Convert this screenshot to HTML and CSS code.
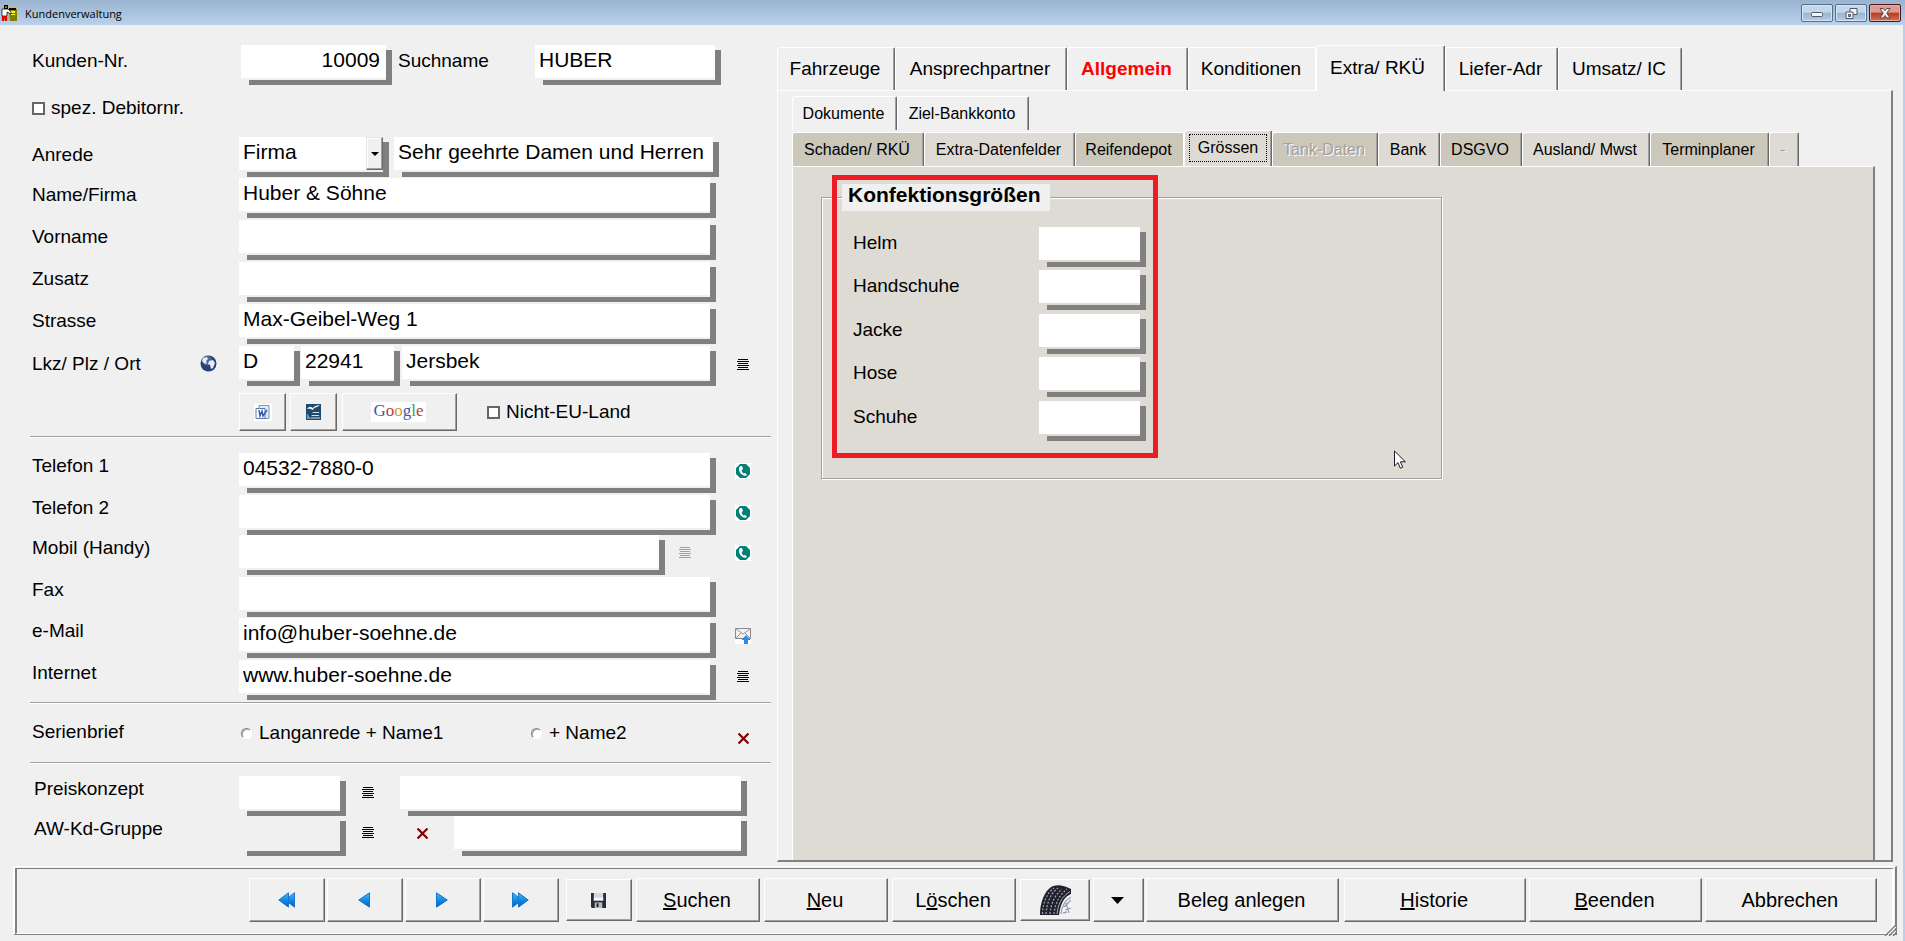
FILE: index.html
```html
<!DOCTYPE html>
<html lang="de">
<head>
<meta charset="utf-8">
<title>Kundenverwaltung</title>
<link rel="stylesheet" href="styles.css">
</head>
<body>
<svg class="defs" aria-hidden="true">
  <symbol id="i-lines" viewBox="0 0 12 11"><path d="M1 .5h10M0 2.500h12M1 4.500h10M0 6.500h12M1 8.500h10M0 10.500h12" stroke="currentColor" fill="none"/></symbol>
  <symbol id="i-cross" viewBox="0 0 11 11"><path d="M.500 .5l10 10M10.500 .5l-10 10" stroke="#800000" stroke-width="2.200" fill="none"/></symbol>
  <symbol id="i-phone" viewBox="0 0 16 16"><rect width="16" height="16" fill="#fff"/><path d="M5 1h6l4 4v6l-4 4H5l-4-4V5z" fill="#008078"/><path d="M5 3.200C3.200 5 4 9.200 7 11.600c1.800 1.500 4 1.600 5 .4l-1.700-2-1.700.6C7.500 9.700 6.800 8.300 6.700 7L8 6 7 3z" fill="#fff"/></symbol>
  <linearGradient id="g-blue" x1="0" y1="0" x2="0" y2="1"><stop offset="0" stop-color="#3fc0f5"/><stop offset=".55" stop-color="#0f86e0"/><stop offset="1" stop-color="#0a5fc0"/></linearGradient>
  <symbol id="i-play" viewBox="0 0 12 16"><path d="M.500 .8L11.300 8 .5 15.200z" fill="url(#g-blue)" stroke="#1874cc"/></symbol>
  <symbol id="i-fast" viewBox="0 0 17 16"><path d="M.500 .8L10 8 .5 15.200z" fill="url(#g-blue)" stroke="#1874cc"/><path d="M6.500 .8L16.200 8 6.500 15.200z" fill="url(#g-blue)" stroke="#1874cc"/></symbol>
</svg>

<header class="titlebar">
  <svg class="app-icon" viewBox="0 0 16 16" width="16" height="16" aria-hidden="true">
    <rect width="16" height="16" fill="#b8b8a8"/><path d="M8 4h8v12H9z" fill="#808000"/><path d="M8 3h7v2H8z" fill="#000"/><path d="M9 6h5v2H9zM10 9h4v1h-4z" fill="#ff0"/><path d="M3 0h4v4H3z" fill="#000"/><path d="M4 1h2v2H4z" fill="#808000"/><path d="M1 4h6l3 3v2L6 7v4H1z" fill="#fff" stroke="#000" stroke-width=".7"/><path d="M1 11h5v5H4v-3l-1 3H1z" fill="#e00000"/>
  </svg>
  <span class="title">Kundenverwaltung</span>
  <div class="window-buttons">
    <button type="button" aria-label="Minimieren"><svg width="12" height="12"><rect x=".5" y="5.500" width="11" height="4" rx="1" fill="#f4f4f4" stroke="#505a68"/></svg></button>
    <button type="button" aria-label="Wiederherstellen"><svg width="13" height="13"><path d="M5 1.500h7v6H5z" fill="#f4f4f4" stroke="#505a68"/><path d="M1 5h7v6.500H1z" fill="#f4f4f4" stroke="#505a68"/><path d="M3.500 7.500h2v2h-2z" fill="#7f9dbd" stroke="#505a68"/></svg></button>
    <button type="button" class="close" aria-label="Schließen"><svg width="12" height="11"><path d="M1 .5h3.200L6 2.800 7.800.5H11L7.800 5.200 11 10H7.800L6 7.500 4.200 10H1l3.200-4.800z" fill="#f4f4f4" stroke="#5a4650"/></svg></button>
  </div>
</header>

<div class="window">
<main class="content">
  <form class="customer">
    <div class="row row-number">
      <label class="caption" for="nr">Kunden-Nr.</label>
      <span class="field number"><input id="nr" class="right" value="10009"></span>
      <label class="inline-caption" for="such">Suchname</label>
      <span class="field grow"><input id="such" value="HUBER"></span>
    </div>
    <div class="row row-check">
      <label class="check"><input type="checkbox"> spez. Debitornr.</label>
    </div>

    <div class="address">
      <div class="row row-salutation">
        <label class="caption" for="anrede">Anrede</label>
        <span class="field combo"><select id="anrede"><option>Firma</option></select><span class="drop"><svg width="8" height="4"><path d="M0 0h8L4 4z"/></svg></span></span>
        <span class="field grow"><input aria-label="Briefanrede" value="Sehr geehrte Damen und Herren"></span>
      </div>
      <div class="row"><label class="caption" for="name">Name/Firma</label><span class="field grow"><input id="name" value="Huber &amp; Söhne"></span><span class="side"></span></div>
      <div class="row"><label class="caption" for="vorname">Vorname</label><span class="field grow"><input id="vorname"></span><span class="side"></span></div>
      <div class="row"><label class="caption" for="zusatz">Zusatz</label><span class="field grow"><input id="zusatz"></span><span class="side"></span></div>
      <div class="row"><label class="caption" for="strasse">Strasse</label><span class="field grow"><input id="strasse" value="Max-Geibel-Weg 1"></span><span class="side"></span></div>
      <div class="row place">
        <label class="caption with-icon" for="lkz">Lkz/ Plz / Ort
          <svg width="17" height="17" viewBox="0 0 17 17" aria-hidden="true"><circle cx="8.500" cy="8.500" r="8" fill="#2b3f78"/><circle cx="7" cy="5.500" r="5" fill="#6c80b4" opacity=".6"/><path d="M3 3l4-1 1 2-2 2 1 2-2 1-3-3zM9 6l4-1 2 3-2 5-2 1-1-4-2-1z" fill="#e8ecf8"/></svg>
        </label>
        <span class="field land"><input id="lkz" value="D"></span>
        <span class="field zip"><input aria-label="Plz" value="22941"></span>
        <span class="field grow"><input aria-label="Ort" value="Jersbek"></span>
        <span class="side"><button type="button" class="glyph" aria-label="Ortsliste"><svg width="12" height="11"><use href="#i-lines"/></svg></button></span>
      </div>
    </div>

    <div class="row-tools">
      <button type="button" class="btn tool" aria-label="Word">
        <svg width="18" height="17" viewBox="0 0 18 17"><rect width="18" height="17" fill="#fff"/><path d="M5 1.500h10v13H5z" fill="#dfe9f7" stroke="#7d94bd"/><path d="M2 4.500h9v10H2z" fill="#fff" stroke="#5a78b0"/><path d="M5 6l1 6 2-5 1 5 4-6" stroke="#3b5ba0" stroke-width="1.500" fill="none"/></svg>
      </button>
      <button type="button" class="btn tool" aria-label="Writer">
        <svg width="15" height="16" viewBox="0 0 16 16" preserveAspectRatio="none"><rect width="16" height="16" fill="#1f4a6c"/><path d="M1 5q3-4 6-1q3-3 8-3q-2 1-3 2q-3 0-5 3q-3-2-6-1z" fill="#e4f0f8"/><path d="M7 8.500h7M6 11.500h8M5 14h10" stroke="#d4e4f0"/><path d="M1 15V9l4 6z" fill="#6f9ab8"/></svg>
      </button>
      <button type="button" class="btn google" aria-label="Google Maps"><span class="google-logo"><span class="g-b">G</span><span class="g-r">o</span><span class="g-y">o</span><span class="g-b">g</span><span class="g-g">l</span><span class="g-r">e</span></span></button>
      <label class="check non-eu"><input type="checkbox"> Nicht-EU-Land</label>
    </div>

    <hr>

    <div class="contact">
      <div class="row"><label class="caption" for="tel1">Telefon 1</label><span class="field grow"><input id="tel1" value="04532-7880-0"></span><span class="side"><button type="button" class="glyph" aria-label="Telefon 1 anrufen"><svg width="16" height="16"><use href="#i-phone"/></svg></button></span></div>
      <div class="row"><label class="caption" for="tel2">Telefon 2</label><span class="field grow"><input id="tel2"></span><span class="side"><button type="button" class="glyph" aria-label="Telefon 2 anrufen"><svg width="16" height="16"><use href="#i-phone"/></svg></button></span></div>
      <div class="row"><label class="caption" for="mobil">Mobil (Handy)</label><span class="field grow"><input id="mobil"></span><span class="extra"><button type="button" class="glyph" disabled aria-label="Mobilliste"><svg width="12" height="11"><use href="#i-lines"/></svg></button></span><span class="side"><button type="button" class="glyph" aria-label="Mobil anrufen"><svg width="16" height="16"><use href="#i-phone"/></svg></button></span></div>
      <div class="row"><label class="caption" for="fax">Fax</label><span class="field grow"><input id="fax"></span><span class="side"></span></div>
      <div class="row"><label class="caption" for="mail">e-Mail</label><span class="field grow"><input id="mail" value="info@huber-soehne.de"></span><span class="side"><button type="button" class="glyph" aria-label="E-Mail senden"><svg width="16" height="16" viewBox="0 0 16 16"><rect width="16" height="16" fill="#fff"/><path d="M.500 .5h15v10H.5z" fill="#f2f2f2" stroke="#888"/><path d="M1 1l7 5 7-5M1 10l5-5M15 10l-5-5" stroke="#999" fill="none"/><path d="M11 7l4.500 5H13v4H9v-4H6.500z" fill="#2a8cf0"/></svg></button></span></div>
      <div class="row"><label class="caption" for="web">Internet</label><span class="field grow"><input id="web" value="www.huber-soehne.de"></span><span class="side web"><button type="button" class="glyph" aria-label="Internetliste"><svg width="12" height="11"><use href="#i-lines"/></svg></button></span></div>
    </div>

    <hr>

    <div class="row-letter">
      <span class="caption">Serienbrief</span>
      <label class="radio first"><input type="radio" name="brief"> Langanrede + Name1</label>
      <label class="radio"><input type="radio" name="brief"> + Name2</label>
      <span class="side"><button type="button" class="glyph" aria-label="Auswahl löschen"><svg width="11" height="11"><use href="#i-cross"/></svg></button></span>
    </div>

    <hr>

    <div class="pricing">
      <div class="row"><label class="caption" for="preis">Preiskonzept</label><span class="field code"><input id="preis"></span><span class="pick"><button type="button" class="glyph" aria-label="Preiskonzepte"><svg width="12" height="11"><use href="#i-lines"/></svg></button></span><span class="field grow"><input aria-label="Preiskonzept Bezeichnung"></span></div>
      <div class="row"><label class="caption" for="gruppe">AW-Kd-Gruppe</label><span class="field code"><input id="gruppe" disabled></span><span class="pick"><button type="button" class="glyph" aria-label="Gruppen"><svg width="12" height="11"><use href="#i-lines"/></svg></button></span><span class="clear"><button type="button" class="glyph" aria-label="Gruppe löschen"><svg width="11" height="11"><use href="#i-cross"/></svg></button></span><span class="field grow"><input aria-label="Gruppe Bezeichnung"></span></div>
    </div>
  </form>

  <section class="details">
    <div class="tabs main-tabs" role="tablist">
      <button type="button" role="tab">Fahrzeuge</button>
      <button type="button" role="tab">Ansprechpartner</button>
      <button type="button" role="tab" class="alert">Allgemein</button>
      <button type="button" role="tab">Konditionen</button>
      <button type="button" role="tab" aria-selected="true">Extra/ RKÜ</button>
      <button type="button" role="tab">Liefer-Adr</button>
      <button type="button" role="tab">Umsatz/ IC</button>
    </div>
    <div class="outer-panel">
      <div class="tabs sub-tabs upper" role="tablist">
        <button type="button" role="tab">Dokumente</button>
        <button type="button" role="tab">Ziel-Bankkonto</button>
      </div>
      <div class="tabs sub-tabs lower" role="tablist">
        <button type="button" role="tab">Schaden/ RKÜ</button>
        <button type="button" role="tab">Extra-Datenfelder</button>
        <button type="button" role="tab">Reifendepot</button>
        <button type="button" role="tab" aria-selected="true"><span class="focus">Grössen</span></button>
        <button type="button" role="tab" disabled>Tank-Daten</button>
        <button type="button" role="tab">Bank</button>
        <button type="button" role="tab">DSGVO</button>
        <button type="button" role="tab">Ausland/ Mwst</button>
        <button type="button" role="tab">Terminplaner</button>
        <button type="button" role="tab" disabled>-</button>
      </div>
      <div class="inner-panel" role="tabpanel">
        <fieldset class="sizes">
          <legend>Konfektionsgrößen</legend>
          <div class="size-rows">
            <label for="helm">Helm</label><span class="field"><input id="helm"></span>
            <label for="handschuhe">Handschuhe</label><span class="field"><input id="handschuhe"></span>
            <label for="jacke">Jacke</label><span class="field"><input id="jacke"></span>
            <label for="hose">Hose</label><span class="field"><input id="hose"></span>
            <label for="schuhe">Schuhe</label><span class="field"><input id="schuhe"></span>
          </div>
        </fieldset>
        <div class="highlight"></div>
        <svg class="pointer" width="12" height="19" viewBox="0 0 12 19" aria-hidden="true"><path d="M.500 1v15l3.500-3.400 2.300 5.600 2.400-1-2.300-5.400h5z" fill="#fff" stroke="#1c1c28"/></svg>
      </div>
    </div>
  </section>
</main>

<footer class="frame">
  <div class="actions">
    <div class="nav">
      <button type="button" class="btn flip" aria-label="Erster"><svg width="17" height="16"><use href="#i-fast"/></svg></button>
      <button type="button" class="btn flip" aria-label="Zurück"><svg width="12" height="16"><use href="#i-play"/></svg></button>
      <button type="button" class="btn" aria-label="Weiter"><svg width="12" height="16"><use href="#i-play"/></svg></button>
      <button type="button" class="btn" aria-label="Letzter"><svg width="17" height="16"><use href="#i-fast"/></svg></button>
    </div>
    <div class="edit">
      <button type="button" class="btn icon" aria-label="Speichern"><svg width="15" height="15" viewBox="0 0 16 16"><path d="M0 0h16v16H1l-1-1z" fill="#2a2c38"/><path d="M3 0h10v8H3z" fill="#d2d8e2"/><path d="M3 5h10v3H3z" fill="#f8fafc"/><path d="M4 10h8v6H4z" fill="#b8bcc4"/><path d="M6 11h2v4H6z" fill="#1c1c24"/></svg></button>
      <button type="button" class="btn"><u>S</u>uchen</button>
      <button type="button" class="btn"><u>N</u>eu</button>
      <button type="button" class="btn">L<u>ö</u>schen</button>
      <button type="button" class="btn icon tyre" aria-label="Reifen"><svg width="31" height="30" viewBox="0 0 31 30"><path d="M29 7l2 1v21H20Q19 14 29 7z" fill="#f6f6fa"/><path d="M0 30C0 18 4 7 11 2q4-2.500 10-1.500 5 .5 10 3.500V9Q21 13 19 30z" fill="#20202a"/><path d="M2.500 29C3 17 7 8 14 3M6 29C7 18 10 9 18 3M10 29C11 19 14 11 22 4M14 29C15 20 18 11 27 4" fill="none" stroke="#9c9eb0" stroke-width="1.300" stroke-dasharray="2 1.500"/><path d="M17 29C18 20 21 12 30 6.500" fill="none" stroke="#d0d2dc" stroke-width=".8"/><path d="M21 29q1-12 10-17M24 22l7-7M25 25l6-2M26 18l3 10M23 28l4-1" fill="none" stroke="#9a9cb2" stroke-width="1.300"/></svg></button>
    </div>
    <div class="voucher">
      <button type="button" class="btn more" aria-label="Belegarten"><svg width="13" height="7" viewBox="0 0 13 7"><path d="M0 0h13L6.500 7z"/></svg></button>
      <button type="button" class="btn">Beleg anlegen</button>
    </div>
    <div class="leave">
      <button type="button" class="btn wide"><u>H</u>istorie</button>
      <button type="button" class="btn"><u>B</u>eenden</button>
      <button type="button" class="btn">Abbrechen</button>
    </div>
  </div>
  <svg class="grip" width="12" height="12" aria-hidden="true"><path d="M1 12L12 1M5 12l7-7M9 12l3-3" stroke="#808080" stroke-width="1.500"/><path d="M3 12l9-9M7 12l5-5" stroke="#fff"/></svg>
</footer>
</div>
</body>
</html>
```

FILE: styles.css
```css
* {
  box-sizing: border-box;
}

body {
  margin: 0;
  min-height: 100vh;
  display: flex;
  flex-direction: column;
  background: #f0f0f0;
  color: #000;
  font: 19px/24px "Liberation Sans", Arial, sans-serif;
}

button,
input,
select {
  margin: 0;
  padding: 0;
  border: 0;
  color: inherit;
  font: inherit;
}

svg {
  display: block;
}

.defs {
  position: absolute;
  width: 0;
  height: 0;
}

/* Title bar */
.titlebar {
  display: flex;
  align-items: center;
  height: 25px;
  padding: 1px 4px 0 1px;
  background: linear-gradient(#9ab4d0, #b9d1ea);
}

.title {
  flex: 1;
  margin: 1px 0 0 8px;
  font: 11px/16px "Open Sans", "Noto Sans", sans-serif;
}

.window-buttons {
  display: flex;
  gap: 2px;
}

.window-buttons button {
  display: flex;
  align-items: center;
  justify-content: center;
  width: 32px;
  height: 18px;
  border: 1px solid #53708f;
  border-radius: 2px;
  background: linear-gradient(#c4d6ea 45%, #9bb6d3 50%, #b4cce6);
  box-shadow: inset 0 0 0 1px #d6e4f3;
}

.window-buttons .close {
  border-color: #4d1420;
  background: linear-gradient(#dd9a8e 45%, #b83a22 50%, #d0705a);
  box-shadow: inset 0 0 0 1px #e6b0a6;
}

/* Window body */
.window {
  flex: 1;
  display: flex;
  flex-direction: column;
  border-right: 2px solid #b9d1ea;
}

.content {
  flex: 1;
  display: grid;
  grid-template-columns: minmax(0, 777fr) minmax(0, 1126fr);
}

.customer {
  padding: 20px 6px 0 30px;
}

.row {
  display: flex;
  height: 40px;
  padding-left: 2px;
}

.caption {
  flex: none;
  width: 207px;
  line-height: 33px;
}

.grow {
  flex: 1;
  min-width: 0;
}

/* Text box with an offset bar to the right and below */
.field {
  display: block;
  position: relative;
  height: 40px;
  padding-right: 6px;
  background:
    linear-gradient(#808080, #808080) right bottom / calc(100% - 8px) 5px no-repeat,
    linear-gradient(#808080, #808080) right bottom / 6px 35px no-repeat;
}

.field input,
.field select {
  display: block;
  width: 100%;
  height: 33px;
  padding: 0 4px 3px;
  border-radius: 0;
  background: #fff;
  font-size: 21px;
  appearance: none;
}

.field input:disabled {
  background: #f0f0f0;
}

.field .right {
  padding-right: 6px;
  text-align: right;
}

.row-number {
  padding-right: 50px;
}

.row-number .caption {
  width: 209px;
  line-height: 31px;
}

.number {
  width: 151px;
}

.inline-caption {
  width: 143px;
  padding-left: 6px;
  line-height: 31px;
}

.row-check {
  align-items: center;
  height: 46px;
}

.check {
  display: flex;
  align-items: center;
  gap: 6px;
}

.check input {
  width: 13px;
  height: 13px;
  border: 2px solid #666;
  background: #fff;
  appearance: none;
}

.address {
  display: grid;
  grid-template-rows: 41px repeat(4, 42px) 40px;
  margin-top: 6px;
}

.row-salutation {
  padding-right: 52px;
}

.row-salutation .caption {
  line-height: 36px;
}

.combo {
  width: 150px;
  margin-right: 5px;
}

.drop {
  position: absolute;
  top: 0;
  right: 6px;
  display: flex;
  align-items: center;
  justify-content: center;
  width: 17px;
  height: 33px;
  border: 1px solid #e3e3e3;
  border-right-color: #696969;
  border-bottom-color: #696969;
  background: #f0f0f0;
  box-shadow: inset -1px -1px #a0a0a0, inset 1px 1px #fff;
  pointer-events: none;
}

.side {
  display: flex;
  flex: none;
  align-items: center;
  justify-content: center;
  width: 55px;
  height: 36px;
  padding-right: 1px;
}

.web {
  height: 32px;
}

.glyph {
  display: block;
  background: none;
}

.glyph:disabled {
  color: #a0a0a0;
}

.with-icon {
  display: flex;
  justify-content: space-between;
  align-items: center;
  height: 34px;
  padding-right: 22px;
}

.land {
  width: 61px;
  margin-right: 1px;
}

.zip {
  width: 99px;
  margin-right: 2px;
}

/* Raised buttons */
.btn {
  display: flex;
  align-items: center;
  justify-content: center;
  border: 1px solid #fff;
  border-right-color: #696969;
  border-bottom-color: #696969;
  background: #f0f0f0;
  box-shadow: inset -1px -1px #a0a0a0;
  white-space: pre;
}

.row-tools {
  display: flex;
  gap: 4px;
  height: 38px;
  margin: 7px 0 5px 209px;
}

.tool {
  width: 47px;
}

.google {
  width: 115px;
  margin-left: 1px;
  padding-right: 2px;
}

.google-logo {
  padding: 0 2px 2px;
  background: #fff;
  font: 17px/18px "Liberation Serif", serif;
}

.g-b { color: #3c5aa8; }
.g-r { color: #b83c44; }
.g-y { color: #c8a038; }
.g-g { color: #4c9a50; }

.non-eu {
  margin-left: 26px;
}

hr {
  height: 2px;
  margin: 0;
  border: 0;
  border-top: 1px solid #a0a0a0;
  background: #fff;
}

.contact {
  display: grid;
  grid-template-rows: 42px 40px 42px 41px 42px 40px;
  margin: 15px 0 2px;
}

.contact .caption,
.pricing .caption {
  line-height: 26px;
}

.extra {
  display: flex;
  align-items: center;
  width: 51px;
  height: 34px;
  padding-left: 14px;
}

.row-letter {
  display: flex;
  height: 58px;
  padding-left: 2px;
}

.row-letter .caption {
  width: 209px;
  line-height: 56px;
}

.radio {
  display: flex;
  flex: 1;
  align-items: center;
  gap: 7px;
  line-height: 62px;
}

.radio.first {
  flex: none;
  width: 290px;
}

.radio input {
  width: 11px;
  height: 11px;
  border: 1px solid #808080;
  border-right-color: #fff;
  border-bottom-color: #fff;
  border-radius: 50%;
  background: #fff;
  box-shadow: inset 1px 1px #b0b0b0;
  appearance: none;
}

.row-letter .side {
  height: 68px;
}

.pricing {
  margin-top: 12px;
}

.pricing .row {
  padding: 0 24px 0 4px;
}

.pricing .caption {
  width: 205px;
}

.code {
  width: 107px;
}

.pick {
  display: flex;
  align-items: center;
  justify-content: center;
  width: 54px;
  height: 32px;
  padding-right: 10px;
}

.clear {
  display: flex;
  align-items: center;
  width: 54px;
  height: 34px;
  padding-left: 17px;
}

/* Tabbed details */
.details {
  display: flex;
  flex-direction: column;
  padding: 20px 10px 0 0;
}

.tabs {
  display: flex;
  align-items: flex-end;
}

.tabs button {
  padding-right: 2px;
  border: 1px solid #fff;
  border-right: 1px solid #696969;
  border-bottom: 0;
  border-radius: 3px 2px 0 0;
  background: #f0f0f0;
  box-shadow: inset -1px 0 #a0a0a0;
  white-space: nowrap;
}

.main-tabs button {
  height: 43px;
}

.main-tabs button[aria-selected="true"] {
  position: relative;
  height: 46px;
  margin-bottom: -1px;
  padding: 0 6px 2px 0;
}

.main-tabs button:nth-child(1) { width: 118px; }
.main-tabs button:nth-child(2) { width: 172px; }
.main-tabs button:nth-child(3) { width: 121px; }
.main-tabs button:nth-child(4) { width: 128px; border-right-color: #fff; box-shadow: none; }
.main-tabs button:nth-child(5) { width: 129px; }
.main-tabs button:nth-child(6) { width: 113px; }
.main-tabs button:nth-child(7) { width: 124px; }

.tabs .alert {
  color: #f00;
  font-weight: bold;
}

.outer-panel {
  flex: 1;
  display: flex;
  flex-direction: column;
  padding: 5px 16px 0 14px;
  border: 1px solid #fff;
  border-right: 2px solid #808080;
  border-bottom: 2px solid #808080;
}

.sub-tabs button {
  height: 34px;
  font-size: 16px;
}

.upper button:nth-child(1) { width: 105px; }
.upper button:nth-child(2) { width: 132px; }

.lower {
  height: 36px;
}

.lower button {
  background: #dedbd5;
}

.lower button:nth-child(1) { width: 132px; }
.lower button:nth-child(2) { width: 151px; }
.lower button:nth-child(3) { width: 109px; border-right-color: #fff; box-shadow: none; }
.lower button:nth-child(4) { width: 88px; }
.lower button:nth-child(5) { width: 106px; }
.lower button:nth-child(6) { width: 62px; }
.lower button:nth-child(7) { width: 82px; }
.lower button:nth-child(8) { width: 128px; }
.lower button:nth-child(9) { width: 119px; }
.lower button:nth-child(10) { width: 30px; }

.lower button:nth-child(1),
.lower button:nth-child(3),
.lower button:nth-child(5),
.lower button:nth-child(7),
.lower button:nth-child(9) {
  background: #cbc7bb;
}

.lower button:disabled {
  color: #a0a0a0;
  text-shadow: 1px 1px #fff;
}

.lower button[aria-selected="true"] {
  position: relative;
  height: 37px;
  margin-bottom: -1px;
  padding: 0 4px 3px;
}

.focus {
  display: block;
  border: 1px dotted #000;
  line-height: 26px;
}

.inner-panel {
  position: relative;
  flex: 1;
  padding: 17px 28px;
  border: 1px solid #fff;
  border-right: 2px solid #808080;
  border-bottom: 0;
  background: #dedbd5;
}

.sizes {
  width: 621px;
  max-width: 100%;
  height: 295px;
  margin: 0;
  padding: 16px 20px 0;
  border: 1px solid #a0a0a0;
  box-shadow: 1px 1px #fff, inset 1px 1px #fff;
}

legend {
  padding: 0 9px 5px 6px;
  background: #f0f0f0;
  font-weight: bold;
  font-size: 21px;
  line-height: 22px;
}

.size-rows {
  display: grid;
  grid-template-columns: 186px 107px;
  grid-template-rows: 43px 44px 43px 44px 40px;
  padding-left: 11px;
}

.size-rows label {
  line-height: 32px;
}

/* Marker frame around the size fields */
.highlight {
  position: absolute;
  top: 8px;
  left: 39px;
  width: 326px;
  height: 283px;
  border: 5px solid #ed1c24;
  pointer-events: none;
}

.pointer {
  position: absolute;
  top: 283px;
  left: 601px;
}

/* Button bar */
.frame {
  position: relative;
  margin: 4px 6px 6px 13px;
  padding: 1px 1px 0 0;
  border: solid #fff;
  border-width: 1px 2px 1px 2px;
  border-right-color: #808080;
  border-bottom-color: #808080;
}

.actions {
  display: flex;
  height: 66px;
  padding: 9px 15px 11px 232px;
  border: solid #808080;
  border-width: 1px 2px 1px 2px;
  border-right-color: #fff;
  border-bottom-color: #fff;
  font-size: 20px;
}

.actions > div {
  display: flex;
}

.actions .btn {
  padding-right: 2px;
}

.actions .nav {
  gap: 2px;
}

.nav .btn {
  width: 76px;
}

.flip svg {
  transform: scaleX(-1);
}

.actions .edit {
  gap: 4px;
  margin-left: 7px;
}

.edit .btn {
  width: 124px;
}

.edit .icon {
  width: 66px;
  margin: 1px 0;
}

.edit .tyre {
  width: 70px;
  padding: 0;
}

.actions .voucher {
  gap: 2px;
  margin-left: 3px;
}

.voucher .btn {
  width: 193px;
}

.voucher .more {
  width: 51px;
}

.actions .leave {
  flex: 1;
  gap: 3px;
  margin-left: 5px;
}

.leave .btn {
  flex: 1 1 173px;
}

.leave .wide {
  flex-basis: 183px;
}

.grip {
  position: absolute;
  right: -1px;
  bottom: -2px;
}
```
